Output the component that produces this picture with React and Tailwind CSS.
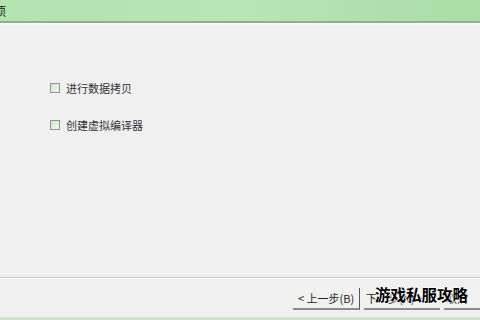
import React from 'react'

const font = { fontFamily: '"Noto Sans CJK SC", "Liberation Sans", sans-serif' }

const Option = ({ label }) => (
  <div className="flex items-center gap-[6px] h-[14px]">
    <span className="w-[10px] h-[10px] border border-[#8d9a8b] bg-gradient-to-br from-[#cfe6cb] to-[#f2f8f0]" />
    <span className="text-[11px] leading-none text-[#333]">{label}</span>
  </div>
)

const Btn = ({ children, className = '' }) => (
  <div className={`h-[22px] flex items-center justify-center whitespace-nowrap border-b-2 border-[#8c8c8c] bg-[#f1f1ef] text-[11px] text-[#222] ${className}`}>
    {children}
  </div>
)

const App = () => {
  return (
    <div className="relative w-[480px] h-[320px] overflow-hidden bg-[#f0f0f0] flex flex-col" style={font}>
      <div className="h-[21px] shrink-0 bg-gradient-to-r from-[#b3e3ae] via-[#b8e6b4] to-[#a9dca5] flex items-center">
        <span className="text-[12px] leading-none text-[#222] -ml-[6px]">项</span>
      </div>
      <div className="h-[2px] bg-[#8fae8c]" />
      <div className="h-[2px] bg-[#fafafa]" />
      <div className="flex-1 flex flex-col">
        <div className="pl-[50px] pt-[56px] flex flex-col gap-[23px]">
          <Option label="进行数据拷贝" />
          <Option label="创建虚拟编译器" />
        </div>
      </div>
      <div className="h-[1px] bg-[#c9c9c9]" />
      <div className="h-[1px] bg-[#ffffff]" />
      <div className="h-[38px] flex items-start pt-[9px] pl-[293px] gap-[4px]">
        <Btn className="w-[67px] shrink-0 border-r border-r-[#555]">&lt; 上一步(B)</Btn>
        <Btn className="w-[76px] shrink-0 justify-start pl-[2px]">下一步(N) &gt;</Btn>
        <Btn className="w-[60px] shrink-0 justify-start pl-[2px]">取消</Btn>
      </div>
      <div className="h-[3px] bg-[#cfe5cb]" />
      <div className="absolute left-[375px] top-[287px] text-[15.5px] font-bold leading-none text-black"
        style={{ textShadow: '0 0 2px #fff, 0 0 2px #fff, 0 0 2px #fff' }}>
        游戏私服攻略
      </div>
    </div>
  )
}

export default App
